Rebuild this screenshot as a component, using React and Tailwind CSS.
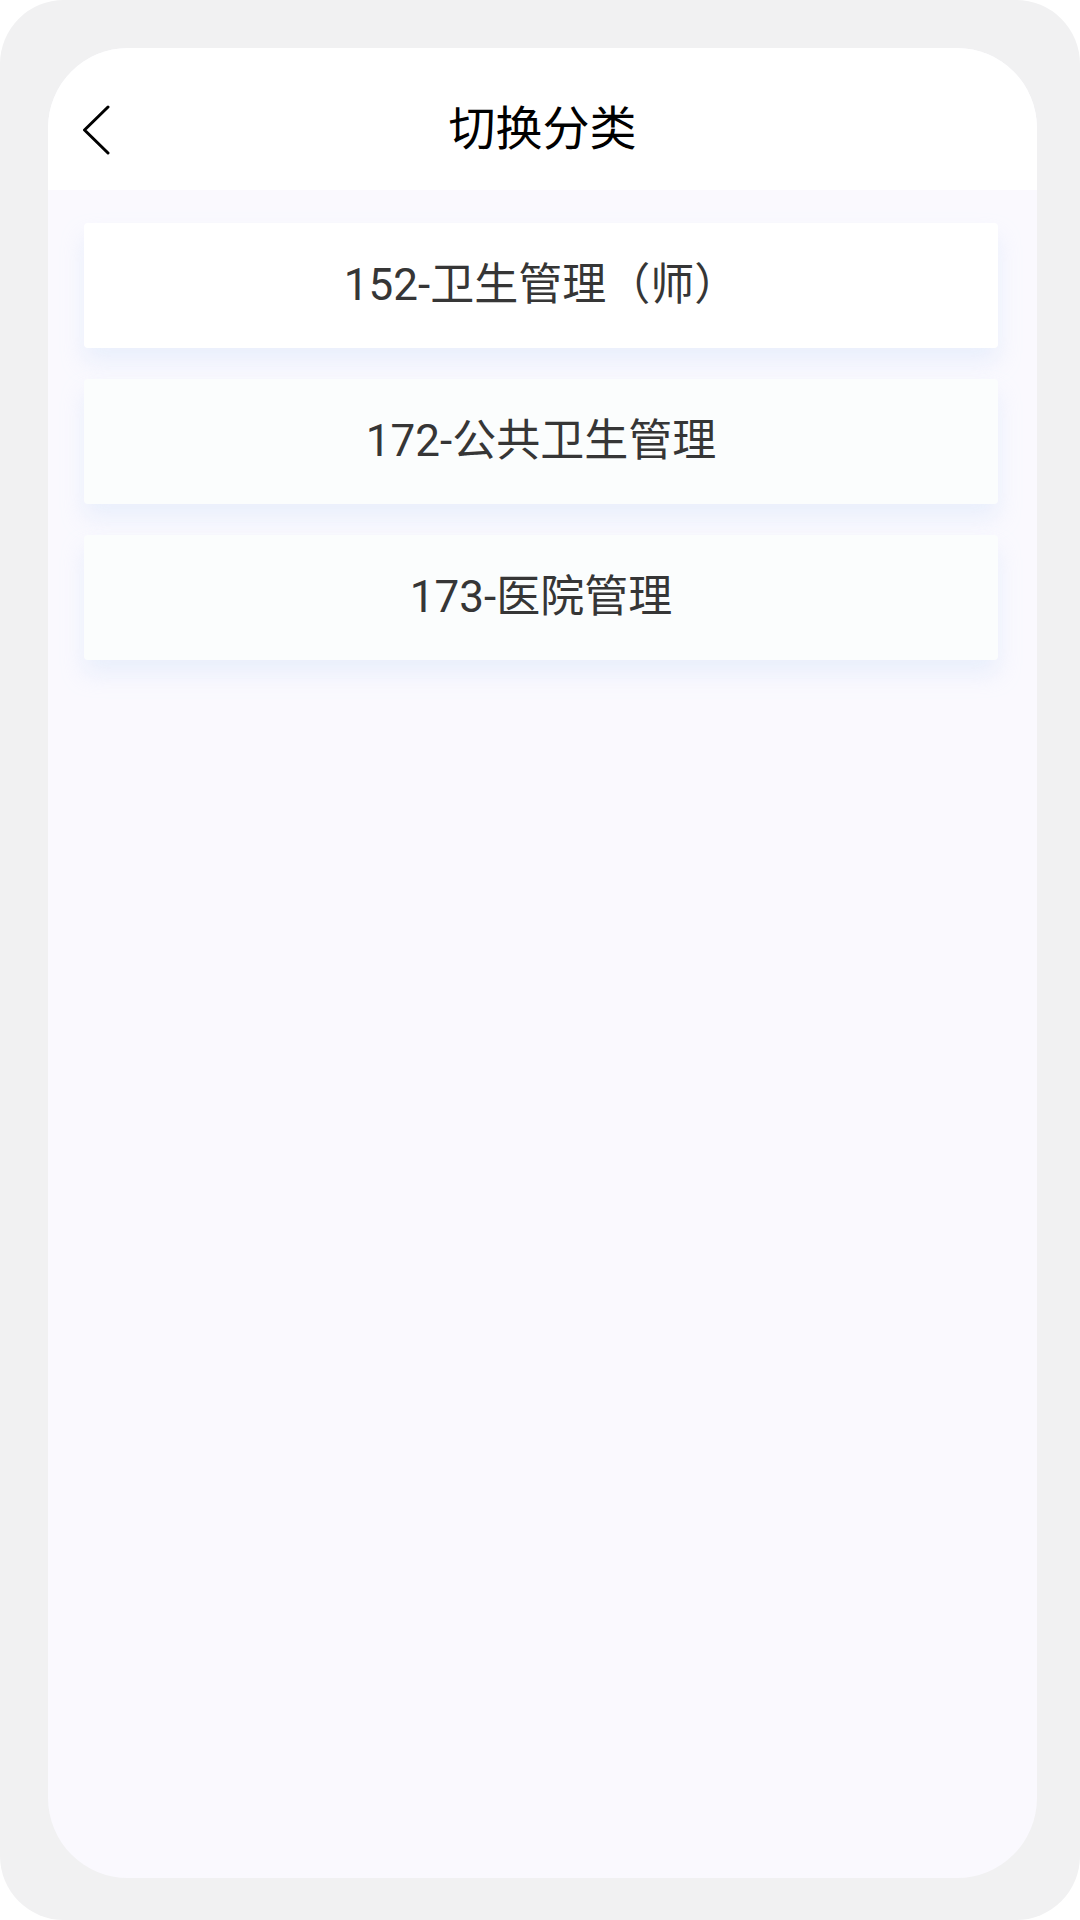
const items = ['152-卫生管理（师）', '172-公共卫生管理', '173-医院管理'];

export default function App() {
    return (
        <div className="w-[1080px] h-[1920px] bg-white">
            <div className="w-full h-full bg-[#f1f1f2] rounded-[64px] pt-[48px] pl-[48px] pr-[43px] pb-[42px]">
                <div className="w-full h-full rounded-[80px] overflow-hidden bg-[#faf9fe] flex flex-col">
                    <div className="h-[142px] bg-white relative flex items-center justify-center pt-[18px] shrink-0">
                        <svg className="absolute left-[33px] top-[57px]" width="30" height="50" viewBox="0 0 30 50" fill="none">
                            <path d="M27 2 L3.5 25 L27 48" stroke="#000" strokeWidth="3" strokeLinecap="round" strokeLinejoin="round" />
                        </svg>
                        <h1 className="text-[47px] leading-none text-black" style={{ fontFamily: "Roboto, 'Noto Sans CJK SC', sans-serif" }}>
                            切换分类
                        </h1>
                    </div>
                    <div className="flex flex-col gap-[31px] pt-[33px] pl-[36px] pr-[39px]">
                        {items.map((label, i) => (
                            <div
                                key={label}
                                className={`h-[125px] rounded-[4px] flex items-center justify-center pb-[2px] shadow-[0_14px_22px_rgba(210,226,250,0.4)] ${i === 0 ? 'bg-white' : 'bg-[#fbfdfd]'}`}
                            >
                                <span className="text-[44px] leading-none text-[#363636]" style={{ fontFamily: "Roboto, 'Noto Sans CJK SC', sans-serif" }}>
                                    {label}
                                </span>
                            </div>
                        ))}
                    </div>
                </div>
            </div>
        </div>
    );
}
